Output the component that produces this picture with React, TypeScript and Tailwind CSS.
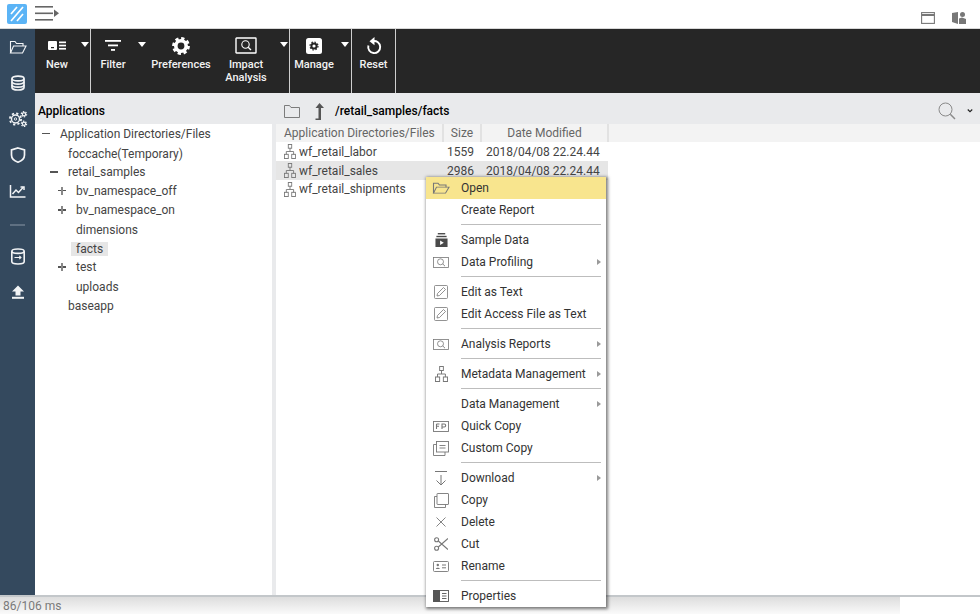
import React from 'react';

type IconProps = { className?: string };

/* ---------- toolbar / sidebar drawings ---------- */
function FolderOpen({ className }: IconProps) {
  return (
    <svg viewBox="0 0 18 14" preserveAspectRatio="none" fill="none" stroke="currentColor" strokeWidth="1.1" className={className}>
      <path d="M1.5 13V1.5H6L7.5 3.5H14V6" />
      <path d="M1.5 13L4.5 6H17L13.5 13Z" />
    </svg>
  );
}

function Database({ className }: IconProps) {
  return (
    <svg viewBox="0 0 16 16" fill="none" stroke="currentColor" strokeWidth="1.7" className={className}>
      <ellipse cx="8" cy="3.5" rx="6" ry="2.4" />
      <path d="M2 3.5V12.5C2 13.8 4.7 15 8 15S14 13.8 14 12.5V3.5" />
      <path d="M2 6.8C2 8 4.7 9.2 8 9.2S14 8 14 6.8" />
      <path d="M2 10C2 11.2 4.7 12.2 8 12.2S14 11.2 14 10" />
    </svg>
  );
}

function Gears({ className }: IconProps) {
  return (
    <svg viewBox="0 0 20 18" fill="none" stroke="currentColor" className={className}>
      <circle cx="7.5" cy="9" r="5.6" strokeWidth="1.8" strokeDasharray="2.2 2.2" />
      <circle cx="7.5" cy="9" r="4" strokeWidth="1.4" />
      <circle cx="7.5" cy="9" r="1.2" strokeWidth="0.9" />
      <circle cx="16" cy="4.2" r="2.6" strokeWidth="1.3" strokeDasharray="1.4 1.3" />
      <circle cx="16" cy="4.2" r="1.6" strokeWidth="1.2" />
      <circle cx="16" cy="13.8" r="2.6" strokeWidth="1.3" strokeDasharray="1.4 1.3" />
      <circle cx="16" cy="13.8" r="1.6" strokeWidth="1.2" />
    </svg>
  );
}

function Shield({ className }: IconProps) {
  return (
    <svg viewBox="0 0 16 16" fill="none" stroke="currentColor" strokeWidth="1.7" className={className}>
      <path d="M8 1L14.5 3V8C14.5 11.5 11.5 14 8 15.2C4.5 14 1.5 11.5 1.5 8V3Z" />
    </svg>
  );
}

function ChartLine({ className }: IconProps) {
  return (
    <svg viewBox="0 0 16 14" fill="none" stroke="currentColor" strokeWidth="1.5" className={className}>
      <path d="M1 1V13H16" />
      <path d="M3 10L6.5 6L9 8.5L14 3" />
      <path d="M11 3H14.5V6" />
    </svg>
  );
}

function DbArrow({ className }: IconProps) {
  return (
    <svg viewBox="0 0 16 17" fill="none" stroke="currentColor" strokeWidth="1.6" className={className}>
      <ellipse cx="8" cy="3.2" rx="6.2" ry="2.2" />
      <path d="M1.8 3.2V13.6C1.8 15 4.6 16 8 16S14.2 15 14.2 13.6V3.2" />
      <path d="M4.5 9.5H11M9.3 7.8L11 9.5L9.3 11.2" strokeWidth="1.1" />
    </svg>
  );
}

function Upload({ className }: IconProps) {
  return (
    <svg viewBox="0 0 14 14" fill="currentColor" className={className}>
      <path d="M7 0.5L13 6.5H9.5V10.5H4.5V6.5H1Z" />
      <rect x="1" y="11.8" width="12" height="2" />
    </svg>
  );
}

function NewIcon({ className }: IconProps) {
  return (
    <svg viewBox="0 0 18 10" fill="currentColor" className={className}>
      <rect x="0" y="0" width="9" height="9" rx="1" />
      <rect x="3" y="6" width="3" height="1.2" fill="#262626" />
      <rect x="11" y="0.5" width="7" height="1.7" />
      <rect x="11" y="3.7" width="7" height="1.7" />
      <rect x="11" y="6.9" width="7" height="1.7" />
    </svg>
  );
}

function FilterIcon({ className }: IconProps) {
  return (
    <svg viewBox="0 0 16 11" fill="currentColor" className={className}>
      <rect x="0" y="0" width="16" height="1.8" />
      <rect x="3" y="4.5" width="10" height="1.8" />
      <rect x="6" y="9" width="4" height="1.8" />
    </svg>
  );
}

function GearSolid({ className }: IconProps) {
  return (
    <svg viewBox="0 0 18 18" fill="none" stroke="currentColor" className={className}>
      <circle cx="9" cy="9" r="5.2" strokeWidth="3.6" />
      <circle cx="9" cy="9" r="7.4" strokeWidth="3" strokeDasharray="3.2 2.6" />
    </svg>
  );
}

function ImpactIcon({ className }: IconProps) {
  return (
    <svg viewBox="0 0 22 17" fill="none" stroke="currentColor" className={className}>
      <rect x="1" y="1" width="20" height="15" strokeWidth="1.4" rx="0.5" />
      <circle cx="10.5" cy="7.5" r="3.7" strokeWidth="1.1" />
      <path d="M13.2 10.3L16 13" strokeWidth="1.3" />
    </svg>
  );
}

function ManageIcon({ className }: IconProps) {
  return (
    <svg viewBox="0 0 16 16" className={className}>
      <rect x="0" y="0" width="16" height="16" rx="2.5" fill="currentColor" />
      <circle cx="8" cy="8" r="2.6" fill="none" stroke="#262626" strokeWidth="2" />
      <circle cx="8" cy="8" r="4" fill="none" stroke="#262626" strokeWidth="1.2" strokeDasharray="1.5 1.64" />
    </svg>
  );
}

function ResetIcon({ className }: IconProps) {
  return (
    <svg viewBox="0 0 16 18" fill="none" stroke="currentColor" className={className}>
      <path d="M7 4.2A6 6 0 1 1 2.4 8.5" strokeWidth="1.9" />
      <path d="M8.5 0L3.5 4.2L8.5 8.2Z" fill="currentColor" stroke="none" />
    </svg>
  );
}

function Caret() {
  return <span className="mt-[13px] h-0 w-0 border-x-[4.5px] border-t-[5px] border-x-transparent border-t-white" />;
}

/* ---------- small grey menu drawings ---------- */
function Sitemap({ className }: IconProps) {
  return (
    <svg viewBox="0 0 14 16" preserveAspectRatio="none" fill="none" stroke="currentColor" strokeWidth="1" className={className}>
      <rect x="5" y="0.5" width="4" height="4" />
      <rect x="0.5" y="11" width="4.5" height="4.5" />
      <rect x="9" y="11" width="4.5" height="4.5" />
      <path d="M7 4.5V8M2.7 11V8H11.2V11" />
    </svg>
  );
}

function ScreenSearch({ className }: IconProps) {
  return (
    <svg viewBox="0 0 16 11" fill="none" stroke="currentColor" className={className}>
      <rect x="0.5" y="0.5" width="15" height="10" strokeWidth="0.8" />
      <circle cx="7.5" cy="4.8" r="3" strokeWidth="0.8" />
      <path d="M9.8 7L12 9.2" strokeWidth="0.9" />
    </svg>
  );
}

function SampleData({ className }: IconProps) {
  return (
    <svg viewBox="0 0 14 15" fill="currentColor" className={className}>
      <rect x="3" y="0" width="8" height="1.5" />
      <rect x="1.5" y="3" width="11" height="1.5" />
      <path d="M0.5 6H13.5V15H0.5ZM5.5 8V13L9.5 10.5Z" fillRule="evenodd" />
    </svg>
  );
}

function EditBox({ className }: IconProps) {
  return (
    <svg viewBox="0 0 14 14" fill="none" stroke="currentColor" strokeWidth="0.8" className={className}>
      <rect x="0.5" y="0.5" width="13" height="13" rx="1" />
      <path d="M3 11L3.5 8.5L9.5 2.5L11.5 4.5L5.5 10.5Z" />
    </svg>
  );
}

function QuickCopy({ className }: IconProps) {
  return (
    <svg viewBox="0 0 16 11" fill="none" className={className}>
      <rect x="0.5" y="0.5" width="15" height="10" stroke="currentColor" strokeWidth="0.9" />
      <path d="M3.5 3V8M3.5 3H6.5M3.5 5.3H6M9 8V3H11.2C13.2 3 13.2 6 11.2 6H9" stroke="currentColor" strokeWidth="1.1" />
    </svg>
  );
}

function CustomCopy({ className }: IconProps) {
  return (
    <svg viewBox="0 0 16 15" fill="none" stroke="currentColor" strokeWidth="0.9" className={className}>
      <rect x="3.5" y="0.5" width="12" height="10.5" />
      <path d="M3.5 3.5H0.5V14.5H12V11" />
      <path d="M6.5 4.5H12.5M6.5 7H12.5" strokeWidth="0.9" />
    </svg>
  );
}

function Download({ className }: IconProps) {
  return (
    <svg viewBox="0 0 12 15" fill="none" stroke="currentColor" strokeWidth="1" className={className}>
      <path d="M0 0.5H12M6 4V14M1.5 9.5L6 14L10.5 9.5" />
    </svg>
  );
}

function CopyIcon({ className }: IconProps) {
  return (
    <svg viewBox="0 0 15 15" fill="none" stroke="currentColor" strokeWidth="0.9" className={className}>
      <rect x="3" y="0.5" width="11.5" height="11" rx="0.5" />
      <path d="M3 3.5H0.5V14.5H11.5V11.5" />
    </svg>
  );
}

function CloseIcon({ className }: IconProps) {
  return (
    <svg viewBox="0 0 10 10" fill="none" stroke="currentColor" strokeWidth="0.9" className={className}>
      <path d="M0.5 0.5L9.5 9.5M9.5 0.5L0.5 9.5" />
    </svg>
  );
}

function Scissors({ className }: IconProps) {
  return (
    <svg viewBox="0 0 14 14" fill="none" stroke="currentColor" strokeWidth="1.1" className={className}>
      <circle cx="2.6" cy="2.8" r="2" />
      <circle cx="2.6" cy="11.2" r="2" />
      <path d="M4.3 4L14 12.5M4.3 10L14 1.5" />
    </svg>
  );
}

function RenameIcon({ className }: IconProps) {
  return (
    <svg viewBox="0 0 16 11" fill="none" stroke="currentColor" className={className}>
      <rect x="0.5" y="0.5" width="15" height="10" rx="1" strokeWidth="0.9" />
      <circle cx="4.8" cy="4" r="1.2" fill="currentColor" stroke="none" />
      <path d="M2.8 8C3 6.2 6.6 6.2 6.8 8Z" fill="currentColor" stroke="none" />
      <path d="M9 4H13M9 6.8H13" strokeWidth="1" />
    </svg>
  );
}

function PropertiesIcon({ className }: IconProps) {
  return (
    <svg viewBox="0 0 16 12" fill="none" className={className}>
      <rect x="0" y="0" width="7" height="12" fill="currentColor" />
      <rect x="0.5" y="0.5" width="15" height="11" stroke="currentColor" strokeWidth="0.9" />
      <path d="M9 3.5H13.5M9 6H13.5M9 8.5H13.5" stroke="currentColor" strokeWidth="0.9" />
    </svg>
  );
}

function RibbonButton({ label, width, icon }: { label: string; width: string; icon: React.ReactNode }) {
  return (
    <div className={`flex flex-col items-center pt-[7px] ${width}`}>
      <div className="flex h-[19px] items-center justify-center text-white">{icon}</div>
      <div className="mt-[3px] whitespace-pre-line text-center text-[11px] font-medium leading-[13px] text-[#f2f2f2]">{label}</div>
    </div>
  );
}

function Ribbon() {
  return (
    <div className="flex h-[64px] shrink-0 items-stretch bg-[#262626]">
      <div className="flex w-[56px] border-r border-[#cfcfcf]">
        <RibbonButton label="New" width="w-[44px]" icon={<NewIcon className="h-[10px] w-[18px]" />} />
        <div className="flex w-[11px] justify-center"><Caret /></div>
      </div>
      <div className="flex w-[199px] border-r border-[#cfcfcf]">
        <RibbonButton label="Filter" width="w-[44px]" icon={<FilterIcon className="h-[11px] w-[16px]" />} />
        <div className="flex w-[13px] justify-center"><Caret /></div>
        <RibbonButton label="Preferences" width="w-[66px]" icon={<GearSolid className="h-[18px] w-[18px]" />} />
        <RibbonButton label={'Impact\nAnalysis'} width="w-[64px]" icon={<ImpactIcon className="h-[17px] w-[22px]" />} />
        <div className="flex w-[11px] justify-center"><Caret /></div>
      </div>
      <div className="flex w-[62px] border-r border-[#cfcfcf]">
        <RibbonButton label="Manage" width="w-[48px]" icon={<ManageIcon className="h-[16px] w-[16px]" />} />
        <div className="ml-[1px] flex w-[12px] justify-center"><Caret /></div>
      </div>
      <div className="flex w-[44px] border-r border-[#cfcfcf]">
        <RibbonButton label="Reset" width="w-[43px]" icon={<ResetIcon className="h-[18px] w-[16px]" />} />
      </div>
    </div>
  );
}

function Sidebar() {
  return (
    <div className="flex w-[35px] shrink-0 flex-col items-center bg-[#34495e] pt-[11px] text-[#f2f4f6]">
      <FolderOpen className="h-[14px] w-[18px]" />
      <Database className="mt-[21px] h-[16px] w-[16px]" />
      <Gears className="mt-[19px] h-[18px] w-[20px]" />
      <Shield className="mt-[19px] h-[16px] w-[16px]" />
      <ChartLine className="mt-[21px] h-[14px] w-[17px]" />
      <div className="mt-[26px] h-[2px] w-[15px] bg-[#5f7082]" />
      <DbArrow className="mt-[22px] h-[17px] w-[16px]" />
      <Upload className="mt-[20px] h-[14px] w-[14px]" />
    </div>
  );
}

function TreeRow({ label, indent, sign, height, active }: { label: string; indent: string; sign?: '+' | '-'; height: string; active?: boolean }) {
  return (
    <div className={`relative flex items-center text-[12px] text-[#444444] ${indent} ${height}`}>
      {sign && (
        <span className="absolute ml-[-18px] h-[1.5px] w-[8px] bg-[#555555]">
          {sign === '+' && <span className="absolute left-[3px] top-[-3px] h-[8px] w-[1.5px] bg-[#888888]" />}
        </span>
      )}
      <span className={active ? 'ml-[-5px] bg-[#e6e6e6] px-[5px] leading-[14px]' : ''}>{label}</span>
    </div>
  );
}

function TreePanel() {
  return (
    <div className="flex w-[241px] shrink-0 flex-col border-r-[4px] border-[#e9eaec]">
      <div className="flex h-[31px] shrink-0 items-center bg-[#e9eaec] pl-[3px] pt-[5px] text-[12px] font-medium text-black">Applications</div>
      <div className="flex-1">
        <TreeRow label="Application Directories/Files" indent="pl-[25px]" sign="-" height="h-[19px]" />
        <TreeRow label="foccache(Temporary)" indent="pl-[33px]" height="h-[21px]" />
        <TreeRow label="retail_samples" indent="pl-[33px]" sign="-" height="h-[16px]" />
        <TreeRow label="bv_namespace_off" indent="pl-[41px]" sign="+" height="h-[21px]" />
        <TreeRow label="bv_namespace_on" indent="pl-[41px]" sign="+" height="h-[18px]" />
        <TreeRow label="dimensions" indent="pl-[41px]" height="h-[21px]" />
        <TreeRow label="facts" indent="pl-[41px]" height="h-[18px]" active />
        <TreeRow label="test" indent="pl-[41px]" sign="+" height="h-[18px]" />
        <TreeRow label="uploads" indent="pl-[41px]" height="h-[21px]" />
        <TreeRow label="baseapp" indent="pl-[33px]" height="h-[18px]" />
      </div>
    </div>
  );
}

const files = [
  { name: 'wf_retail_labor', size: '1559', date: '2018/04/08 22.24.44', rowClass: 'h-[19px]' },
  { name: 'wf_retail_sales', size: '2986', date: '2018/04/08 22.24.44', rowClass: 'h-[19px] bg-[#e6e6e6]' },
  { name: 'wf_retail_shipments', size: '', date: '', rowClass: 'h-[18px]' },
];

function FilePanel() {
  return (
    <div className="flex min-w-0 flex-1 flex-col">
      <div className="flex h-[31px] shrink-0 items-center bg-[#e9eaec] pt-[5px]">
        <svg viewBox="0 0 16 13" fill="none" stroke="#6f6f6f" strokeWidth="0.9" className="ml-[8px] h-[13px] w-[16px]">
          <path d="M0.5 12.5V0.5H5.5L7 2.5H15.5V12.5Z" />
        </svg>
        <svg viewBox="0 0 10 17" fill="#555555" className="ml-[14px] h-[17px] w-[10px]">
          <path d="M5.5 0L10 5H7V17H1.5V15.5H4.5V5H1.5Z" />
        </svg>
        <div className="ml-[11px] text-[12px] font-medium text-black">/retail_samples/facts</div>
        <div className="ml-auto flex items-center">
          <svg viewBox="0 0 18 18" fill="none" stroke="#8a8a8a" className="h-[18px] w-[18px]">
            <circle cx="7.5" cy="7.5" r="6.5" strokeWidth="1" />
            <path d="M12.3 12.3L17 17" strokeWidth="1.5" />
          </svg>
          <svg viewBox="0 0 8 5" fill="none" stroke="#222222" strokeWidth="1.5" className="ml-[11px] mr-[7px] h-[4px] w-[6px]">
            <path d="M1 0.5L4 3.5L7 0.5" />
          </svg>
        </div>
      </div>
      <div className="flex h-[18px] shrink-0 items-center bg-[#f3f3f3] text-[12px] text-[#666666]">
        <div className="flex h-full w-[168px] items-center whitespace-nowrap border-r-2 border-[#e2e2e2] pl-[8px]">Application Directories/Files</div>
        <div className="flex h-full w-[38px] items-center justify-center border-r-2 border-[#e2e2e2]">Size</div>
        <div className="flex h-full w-[127px] items-center justify-center border-r-2 border-[#e2e2e2]">Date Modified</div>
      </div>
      {files.map((f) => (
        <div key={f.name} className={`flex w-[332px] shrink-0 items-center text-[12px] text-[#444444] ${f.rowClass}`}>
          <Sitemap className="ml-[8px] h-[15px] w-[12px] shrink-0 text-[#777777]" />
          <span className="ml-[3px] w-[143px] shrink-0 truncate">{f.name}</span>
          <span className="w-[32px] shrink-0 text-right">{f.size}</span>
          <span className="ml-[12px] whitespace-nowrap">{f.date}</span>
        </div>
      ))}
    </div>
  );
}

type MenuItem = { label: string; icon?: React.ReactNode; arrow?: boolean; active?: boolean } | 'sep';

const iconTone = 'text-[#777777]';
const menuItems: MenuItem[] = [
  { label: 'Open', active: true, icon: <FolderOpen className={`h-[12px] w-[18px] ${iconTone}`} /> },
  { label: 'Create Report' },
  'sep',
  { label: 'Sample Data', icon: <SampleData className="h-[14px] w-[13px] text-[#4a4a4a]" /> },
  { label: 'Data Profiling', arrow: true, icon: <ScreenSearch className={`h-[11px] w-[16px] ${iconTone}`} /> },
  'sep',
  { label: 'Edit as Text', icon: <EditBox className={`h-[14px] w-[14px] ${iconTone}`} /> },
  { label: 'Edit Access File as Text', icon: <EditBox className={`h-[14px] w-[14px] ${iconTone}`} /> },
  'sep',
  { label: 'Analysis Reports', arrow: true, icon: <ScreenSearch className={`h-[11px] w-[16px] ${iconTone}`} /> },
  'sep',
  { label: 'Metadata Management', arrow: true, icon: <Sitemap className={`h-[16px] w-[13px] ${iconTone}`} /> },
  'sep',
  { label: 'Data Management', arrow: true },
  { label: 'Quick Copy', icon: <QuickCopy className={`h-[11px] w-[16px] ${iconTone}`} /> },
  { label: 'Custom Copy', icon: <CustomCopy className={`h-[15px] w-[16px] ${iconTone}`} /> },
  'sep',
  { label: 'Download', arrow: true, icon: <Download className={`h-[15px] w-[12px] ${iconTone}`} /> },
  { label: 'Copy', icon: <CopyIcon className={`h-[15px] w-[15px] ${iconTone}`} /> },
  { label: 'Delete', icon: <CloseIcon className={`h-[10px] w-[10px] ${iconTone}`} /> },
  { label: 'Cut', icon: <Scissors className={`h-[14px] w-[14px] ${iconTone}`} /> },
  { label: 'Rename', icon: <RenameIcon className={`h-[11px] w-[16px] ${iconTone}`} /> },
  'sep',
  { label: 'Properties', icon: <PropertiesIcon className="h-[12px] w-[16px] text-[#555555]" /> },
];

function ContextMenu() {
  return (
    <div className="absolute left-[426px] top-[177px] w-[180px] bg-white shadow-[1px_1px_3px_1px_rgba(0,0,0,0.5)]">
      {menuItems.map((item, i) =>
        item === 'sep' ? (
          <div key={i} className="flex h-[8px] items-start pl-[35px] pr-[5px] pt-[3px]">
            <div className="h-px w-full bg-[#bdbdbd]" />
          </div>
        ) : (
          <div key={item.label} className={`relative flex h-[22px] items-center text-[12px] text-[#333333] ${item.active ? 'bg-[#f8e58e]' : ''}`}>
            <div className="flex w-[30px] shrink-0 justify-center">{item.icon}</div>
            <span className="ml-[5px]">{item.label}</span>
            {item.arrow && (
              <span className="absolute right-[5px] h-0 w-0 border-y-[3.5px] border-l-[4px] border-y-transparent border-l-[#9a9a9a]" />
            )}
          </div>
        ),
      )}
    </div>
  );
}

export default function App() {
  return (
    <div className="relative flex h-[614px] w-[980px] flex-col overflow-hidden bg-white font-['Roboto',sans-serif]">
      {/* TOP BAR */}
      <div className="flex h-[29px] shrink-0 items-center border-b border-[#d8d8d8] pl-[7px]">
        <div className="mb-[1px] flex h-[20px] w-[20px] items-center justify-center rounded-[2px] bg-[#5bb4f6]">
          <svg viewBox="0 0 14 16" fill="none" stroke="white" strokeWidth="1.7" className="h-[16px] w-[14px]">
            <path d="M1 8L7 1M1 15L13 1M7 15L13 8" />
          </svg>
        </div>
        <svg viewBox="0 0 24 15" className="mb-[2px] ml-[8px] h-[15px] w-[24px]" fill="#666666">
          <rect x="0" y="0" width="18" height="1.6" />
          <rect x="0" y="6.5" width="18" height="1.6" />
          <rect x="0" y="13" width="18" height="1.6" />
          <path d="M19 3.5L24 7.3L19 11Z" />
        </svg>
        <div className="ml-auto flex items-center pt-[7px]">
          <svg viewBox="0 0 14 12" fill="none" stroke="#777777" className="h-[12px] w-[14px]">
            <rect x="0.6" y="0.6" width="12.8" height="10.8" strokeWidth="1.1" />
            <path d="M0.6 3H13.4" strokeWidth="2" />
          </svg>
          <svg viewBox="0 0 14 12" fill="#777777" className="ml-[17px] mr-[14px] h-[12px] w-[14px]">
            <path d="M0 1L6 0V12L0 10Z" />
            <circle cx="10.5" cy="2.5" r="2.5" />
            <path d="M7 12V6.5L10 5.5L14 7V12Z" />
          </svg>
        </div>
      </div>

      <div className="flex min-h-0 flex-1">
        <Sidebar />
        <div className="flex min-w-0 flex-1 flex-col">
          <Ribbon />
          <div className="flex min-h-0 flex-1">
            <TreePanel />
            <FilePanel />
          </div>
        </div>
      </div>

      {/* STATUS BAR */}
      <div className="flex h-[19px] shrink-0 border-t-2 border-[#c3c7ca]">
        <div className="flex w-[900px] items-center bg-gradient-to-b from-[#dddddd] to-[#fafafa] pl-[3px] text-[12px] text-[#7a7a7a]">86/106 ms</div>
      </div>

      <ContextMenu />
    </div>
  );
}
